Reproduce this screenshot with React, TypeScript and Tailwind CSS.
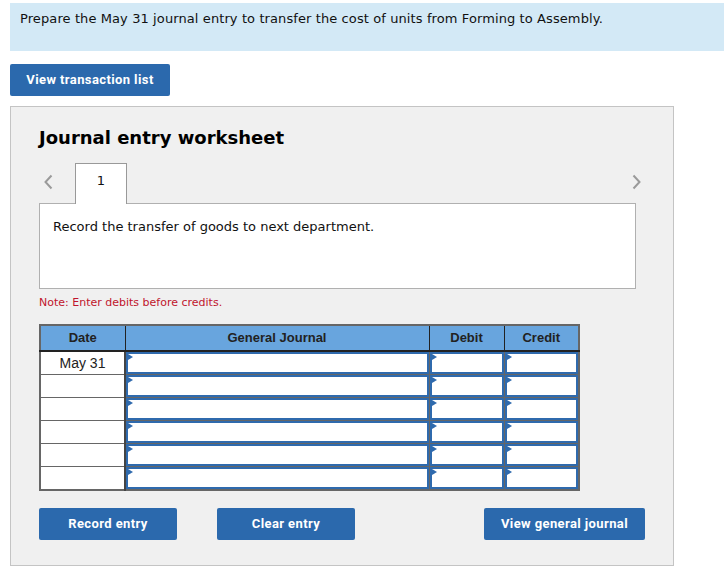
const ROWS = ['May 31', '', '', '', '', ''];

function Chevron({ dir }: { dir: 'left' | 'right' }) {
  return (
    <svg width="11" height="16" viewBox="0 0 11 16" className="text-[#9a9a9a]">
      <polyline
        points={dir === 'left' ? '8.5,1.5 2.5,8 8.5,14.5' : '2.5,1.5 8.5,8 2.5,14.5'}
        fill="none"
        stroke="currentColor"
        strokeWidth="2"
      />
    </svg>
  );
}

function InputCell() {
  return (
    <td className="border border-[#666] p-0 bg-white">
      <div className="relative h-[22px] border-2 border-[#2f6aad] bg-white">
        <span className="absolute left-0 top-0 w-0 h-0 border-y-[3px] border-y-transparent border-l-[5px] border-l-[#2f6aad]" />
      </div>
    </td>
  );
}

function BlueButton({ label, width }: { label: string; width: string }) {
  return (
    <button
      className={`${width} h-8 rounded-[2px] bg-[#2b69ad] text-white text-[13px] font-bold tracking-[0.4px] font-['Roboto',sans-serif]`}
    >
      {label}
    </button>
  );
}

export default function App() {
  return (
    <div className="w-[724px] h-[571px] bg-white overflow-hidden font-['DejaVu_Sans','Verdana',sans-serif] text-[#111]">
      {/* Question banner */}
      <div className="mt-[3px] ml-[10px] h-12 bg-[#d3e9f6] pl-[10px] pt-[8px] text-[13px] leading-4 tracking-[0.1px]">
        Prepare the May 31 journal entry to transfer the cost of units from Forming to Assembly.
      </div>

      <div className="ml-[10px] mt-[13px]">
        <BlueButton label="View transaction list" width="w-[160px]" />
      </div>

      {/* Worksheet panel */}
      <div className="ml-[10px] mt-[10px] w-[664px] h-[460px] border border-[#c4c4c4] bg-[#f0f0f0] pl-[28px] pt-[19px]">
        <h2 className="text-[18px] leading-6 font-bold text-black">Journal entry worksheet</h2>

        <div className="mt-[13px] flex items-center w-[603px] h-[40px]">
          <div className="ml-[4px] mt-[-2px]">
            <Chevron dir="left" />
          </div>
          <div className="relative z-10 ml-[21px] -mb-px self-end w-[52px] h-[41px] border border-b-0 border-[#999] bg-white flex justify-center pt-[9px] text-[13px] leading-4">
            1
          </div>
          <div className="flex-1" />
          <div className="mt-[-2px]">
            <Chevron dir="right" />
          </div>
        </div>

        <div className="w-[597px] h-[86px] border border-[#b0b0b0] bg-white pl-[13px] pt-[15px] text-[13px] leading-4">
          Record the transfer of goods to next department.
        </div>

        <div className="mt-[7px] text-[11px] leading-[14px] text-[#c0142c]">Note: Enter debits before credits.</div>

        <table className="mt-[14px] table-fixed border-collapse border-2 border-[#666] w-[539px] font-['Liberation_Sans',Arial,sans-serif]">
          <colgroup>
            <col className="w-[85px]" />
            <col className="w-[304px]" />
            <col className="w-[75px]" />
            <col className="w-[75px]" />
          </colgroup>
          <thead>
            <tr className="h-[26px] bg-[#68a5de] text-[13px] font-bold text-[#222]">
              <th className="border border-[#666] border-b-2 border-b-[#222] border-r-[#222]">Date</th>
              <th className="border border-[#666] border-b-2 border-b-[#222] border-r-[#222]">General Journal</th>
              <th className="border border-[#666] border-b-2 border-b-[#222] border-r-[#222]">Debit</th>
              <th className="border border-[#666] border-b-2 border-b-[#222]">Credit</th>
            </tr>
          </thead>
          <tbody>
            {ROWS.map((d, i) => (
              <tr key={i}>
                <td className="border border-[#666] border-r-2 border-r-[#444] bg-white text-center text-[14px] text-[#222] h-[22px]">
                  {d}
                </td>
                <InputCell />
                <InputCell />
                <InputCell />
              </tr>
            ))}
          </tbody>
        </table>

        <div className="mt-[17px] flex items-center w-[606px]">
          <BlueButton label="Record entry" width="w-[138px]" />
          <div className="ml-[40px]">
            <BlueButton label="Clear entry" width="w-[138px]" />
          </div>
          <div className="flex-1" />
          <BlueButton label="View general journal" width="w-[161px]" />
        </div>
      </div>
    </div>
  );
}
